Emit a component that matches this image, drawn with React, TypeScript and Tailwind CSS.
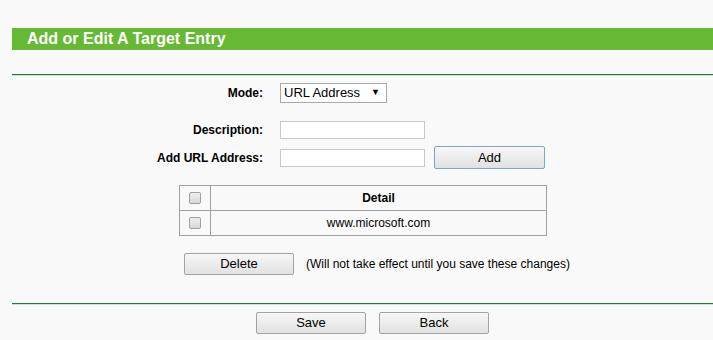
import React from "react";

function Btn({ label, className = "" }: { label: string; className?: string }) {
  return (
    <button
      className={`h-[22px] rounded-[2px] border border-[#a3a3a3] bg-gradient-to-b from-[#f7f7f7] to-[#e1e1e1] text-[13px] text-black ${className}`}
    >
      {label}
    </button>
  );
}

function Check() {
  return (
    <span className="block h-[12px] w-[12px] rounded-[2px] border border-[#a0a0a0] bg-gradient-to-b from-[#eeeeee] to-[#d8d8d8]" />
  );
}

export default function App() {
  return (
    <div className="h-[340px] w-[713px] overflow-hidden bg-[#f9f9f9] pt-[28px] font-['Liberation_Sans',Arial,sans-serif] text-[12px] text-black">
      {/* Title bar */}
      <div className="ml-[12px] flex h-[22px] items-center bg-[#67b834] pl-[15px]">
        <h1 className="text-[16px] font-bold text-white">Add or Edit A Target Entry</h1>
      </div>

      <div className="ml-[12px] mt-[24px] h-[2px] border-t border-[#1d7a3b] bg-[#cfe3d3]" />

      {/* Form */}
      <div className="mt-[7px] flex flex-col">
        <div className="flex h-[20px] items-center">
          <label className="w-[263px] text-right font-bold">Mode:</label>
          <div className="ml-[17px] flex h-[20px] w-[107px] items-center justify-between border border-[#a9a9a9] bg-white pl-[3px] pr-[6px] text-[13px]">
            <span>URL Address</span>
            <span className="text-[9px]">▼</span>
          </div>
        </div>

        <div className="mt-[18px] flex h-[18px] items-center">
          <label className="w-[263px] text-right font-bold">Description:</label>
          <input className="ml-[17px] h-[18px] w-[145px] border border-[#c8c8c8] bg-white" />
        </div>

        <div className="mt-[7px] flex h-[23px] items-center">
          <label className="w-[263px] text-right font-bold">Add URL Address:</label>
          <input className="ml-[17px] h-[18px] w-[145px] border border-[#c8c8c8] bg-white" />
          <button className="ml-[9px] h-[23px] w-[111px] rounded-[2px] border border-[#7aa3d6] bg-gradient-to-b from-[#f7f7f7] to-[#e1e1e1] text-[13px]">
            Add
          </button>
        </div>

        {/* Entries table */}
        <table className="ml-[179px] mt-[16px] w-[368px] border-collapse">
          <tbody>
            <tr className="h-[25px]">
              <td className="w-[31px] border border-[#a0a0a0]">
                <div className="flex justify-center"><Check /></div>
              </td>
              <td className="border border-[#a0a0a0] text-center font-bold">Detail</td>
            </tr>
            <tr className="h-[25px]">
              <td className="border border-[#a0a0a0]">
                <div className="flex justify-center"><Check /></div>
              </td>
              <td className="border border-[#a0a0a0] text-center">www.microsoft.com</td>
            </tr>
          </tbody>
        </table>

        <div className="ml-[184px] mt-[17px] flex items-center">
          <Btn label="Delete" className="w-[110px]" />
          <span className="ml-[12px]">(Will not take effect until you save these changes)</span>
        </div>
      </div>

      <div className="ml-[12px] mt-[28px] h-[2px] border-t border-[#1d7a3b] bg-[#cfe3d3]" />

      <div className="ml-[256px] mt-[7px] flex gap-[13px]">
        <Btn label="Save" className="w-[110px]" />
        <Btn label="Back" className="w-[110px]" />
      </div>
    </div>
  );
}
